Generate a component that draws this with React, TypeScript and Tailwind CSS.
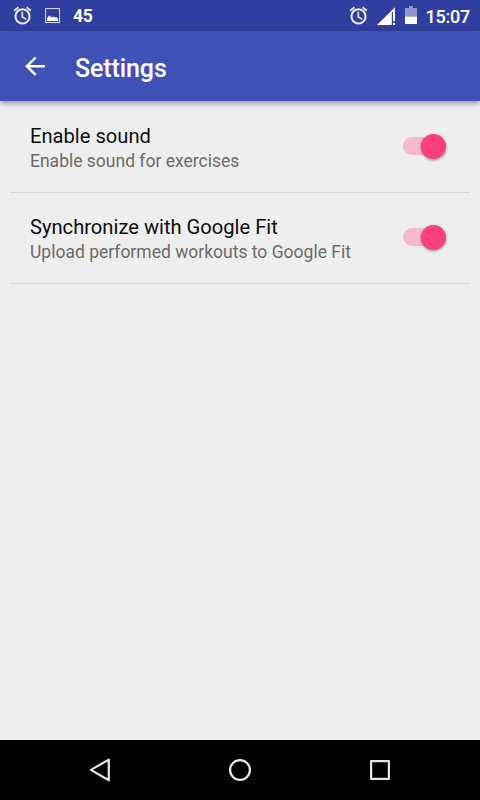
import { useState } from "react";

interface SettingRowProps {
  title: string;
  summary: string;
}

const AlarmIcon = () => (
  <svg viewBox="0 0 24 24" className="w-[21px] h-[21px] shrink-0" fill="#eff0f9" stroke="#eff0f9" strokeWidth="0.3">
    <path d="M22 5.72l-4.6-3.86-1.29 1.53 4.6 3.86L22 5.72zM7.88 3.39L6.6 1.86 2 5.71l1.29 1.53 4.59-3.85zM12.5 8H11v6l4.75 2.85.75-1.23-4-2.37V8zM12 4c-4.97 0-9 4.03-9 9s4.02 9 9 9c4.97 0 9-4.03 9-9s-4.03-9-9-9zm0 16c-3.87 0-7-3.13-7-7s3.13-7 7-7 7 3.13 7 7-3.13 7-7 7z" />
  </svg>
);

const StatusBar = () => (
  <div className="h-[31px] bg-[#303f9f] flex items-center text-white">
    <div className="ml-[12px] flex">
      <AlarmIcon />
    </div>
    {/* Screenshot notification */}
    <svg viewBox="0 0 16 16" className="ml-[12px] w-4 h-4" fill="none">
      <rect x="0.5" y="0.5" width="14" height="14" stroke="#ced2ea" strokeWidth="1.1" />
      <path d="M2 13V10L4.5 7.6L6.7 9.4L8.3 8.6L10 9.8L11.2 9L13 10.6V13Z" fill="#fff" />
    </svg>
    <span className="ml-[12px] mt-[2px] text-[17.5px] tracking-[-0.2px] leading-none font-bold">45</span>

    <div className="ml-auto flex items-center">
      <AlarmIcon />
      {/* Signal */}
      <svg viewBox="0 0 19 18" className="ml-[8px] w-[19px] h-[18px]">
        <path d="M0 18L18 0.2V5H14.8V18Z" fill="#fff" />
        <path d="M16 5H18V14H16ZM16 15.8H18V18H16Z" fill="#fff" />
      </svg>
      {/* Battery */}
      <svg viewBox="0 0 12 18" className="ml-[9px] mb-px w-3 h-[18px]">
        <path d="M4 0H8V2H12V10.5H0V2H4Z" fill="#8f97cb" />
        <path d="M0 10.5H12V18H0Z" fill="#fff" />
      </svg>
      <span className="ml-[9px] mr-[10px] mt-[2px] text-[18px] tracking-[-0.25px] leading-none font-medium">15:07</span>
    </div>
  </div>
);

const Toolbar = () => (
  <div className="relative h-[70px] bg-[#3f51b5] flex items-center text-white shadow-[0_2px_6px_rgba(0,0,0,0.42)]">
    <button className="ml-[25px] w-[21px] h-[20px]">
      <svg viewBox="0 0 21 20" className="w-[21px] h-[20px]" fill="none" stroke="#fff" strokeWidth="2.4">
        <path d="M20 10.2H2.2M10.7 1.5L1.8 10.2L10.7 18.9" />
      </svg>
    </button>
    <h1 className="ml-[29px] mt-[4px] text-[25px] tracking-[-0.1px] leading-none font-medium">Settings</h1>
  </div>
);

function SettingRow({ title, summary }: SettingRowProps) {
  const [checked, setChecked] = useState(true);

  return (
    <div className="mx-[10px] h-[91px] pl-5 pr-[24px] flex items-center justify-between border-b border-[#d8d8d8]">
      <div className="flex flex-col pt-[2px]">
        <span className="text-[20.15px] leading-[26px] text-[#0d0d0d]">{title}</span>
        <span className="text-[17.5px] leading-[24px] text-[#6b6b6b]">{summary}</span>
      </div>
      <button
        role="switch"
        aria-checked={checked}
        onClick={() => setChecked(!checked)}
        className={`w-[43px] h-[18px] mb-[2px] rounded-full flex items-center ${checked ? "bg-[#f4b9ce] justify-end" : "bg-[#b9b9b9]"}`}
      >
        <span
          className={`w-[25px] h-[25px] shrink-0 rounded-full shadow-[0_1px_3px_rgba(0,0,0,0.45)] ${checked ? "bg-[#fc3f80]" : "bg-[#f1f1f1]"}`}
        />
      </button>
    </div>
  );
}

const NavigationBar = () => (
  <div className="h-[60px] bg-black flex items-center justify-between px-[88px]">
    <svg viewBox="0 0 24 24" className="w-6 h-6" fill="none" stroke="#e8e8e8" strokeWidth="2.2" strokeLinejoin="round">
      <path d="M20.8 1.6V22.2L2.9 11.9Z" />
    </svg>
    <svg viewBox="0 0 24 24" className="w-6 h-6" fill="none" stroke="#e8e8e8" strokeWidth="2.2">
      <circle cx="12" cy="12" r="9.9" />
    </svg>
    <svg viewBox="0 0 24 24" className="w-6 h-6" fill="none" stroke="#e8e8e8" strokeWidth="2.2" strokeLinejoin="round">
      <rect x="3.1" y="3.1" width="17.8" height="17.8" />
    </svg>
  </div>
);

export default function App() {
  return (
    <div className="w-[480px] h-[800px] flex flex-col overflow-hidden bg-[#eeeeee] font-[Roboto,sans-serif]">
      <StatusBar />
      <Toolbar />
      <div className="flex-1 pt-px">
        <SettingRow title="Enable sound" summary="Enable sound for exercises" />
        <SettingRow title="Synchronize with Google Fit" summary="Upload performed workouts to Google Fit" />
      </div>
      <NavigationBar />
    </div>
  );
}
